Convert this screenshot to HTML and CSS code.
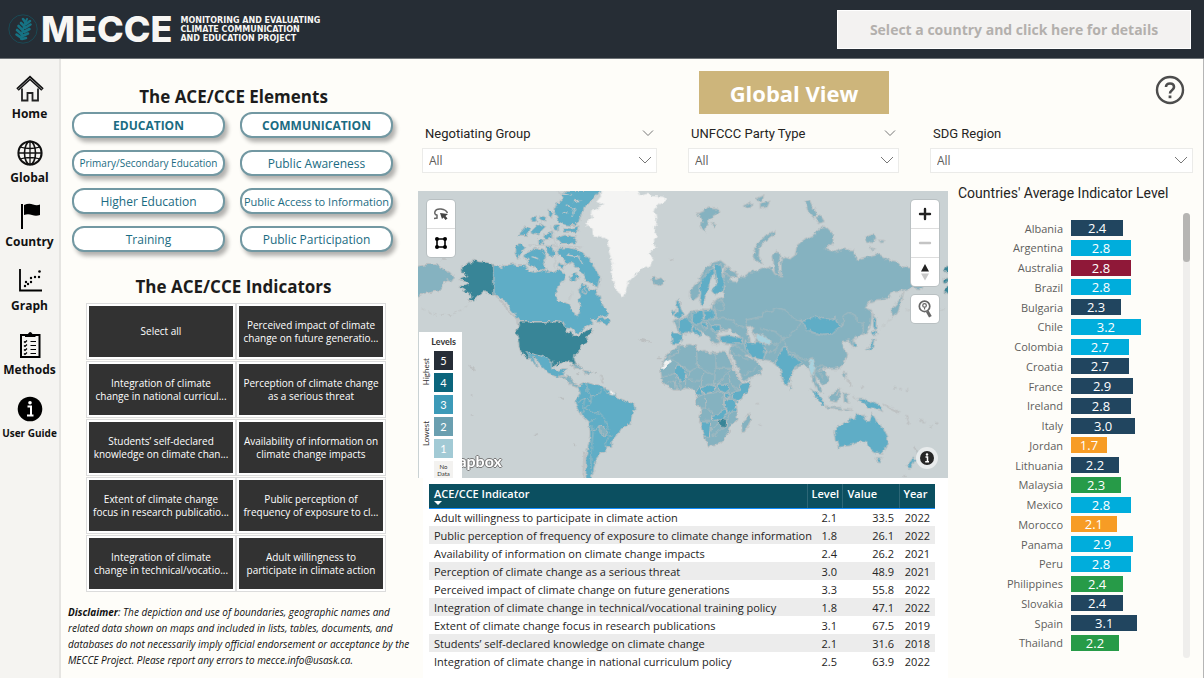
FILE: index.html
```html
<!DOCTYPE html>
<html lang="en">
<head>
<meta charset="utf-8">
<title>MECCE Global View</title>
<link rel="stylesheet" href="styles.css">
</head>
<body>
<header class="topbar">
  <div class="brand">
    <svg class="brand-mark" viewBox="0 0 30 30" aria-hidden="true">
      <circle cx="15" cy="15" r="14.2" fill="none" stroke="#1a4a56" stroke-width="1"/>
      <g fill="none" stroke="#167384" stroke-linecap="round">
        <path d="M13 25Q14 16 19 5" stroke-width="2"/>
        <path d="M18 9L15 5M17 13L13 9M15.500 17L10.500 12M14.500 21L9 16M13.500 24L8.500 20.500" stroke-width="2.600"/>
        <path d="M18 10L22 7M17 14L22.500 10.500M16 18L21.500 15M14.500 22L20 19.500M14 25L18 24" stroke-width="2.600"/>
      </g>
    </svg>
    <span class="brand-name">MECCE</span>
    <span class="brand-tag">MONITORING AND EVALUATING<br>CLIMATE COMMUNICATION<br>AND EDUCATION PROJECT</span>
  </div>
  <button class="details-btn" type="button">Select a country and click here for details</button>
</header>

<div class="shell">
  <nav class="sidebar" aria-label="Pages">
    <a class="nav-item" href="#home">
      <svg viewBox="0 0 28 28"><path d="M6 13.500V25.500H11.500V18H16.500V25.500H22V13.500" fill="none" stroke="#222" stroke-width="1.800"/><path d="M1.500 14.500L14 3L26.500 14.500" fill="none" stroke="#111" stroke-width="3.600"/><path d="M1.800 14.300L14 3.200L26.200 14.300" fill="none" stroke="#888" stroke-width="1"/></svg>
      <span>Home</span></a>
    <a class="nav-item" href="#global">
      <svg viewBox="0 0 28 28" fill="none" stroke="#111"><circle cx="14" cy="14" r="11.600" stroke-width="2"/><ellipse cx="14" cy="14" rx="5.500" ry="11.600" stroke-width="1.600"/><path d="M14 2V26M2 14H26M4 8Q14 11 24 8M4 20Q14 17 24 20" stroke-width="1.300"/></svg>
      <span>Global</span></a>
    <a class="nav-item" href="#country">
      <svg viewBox="0 0 28 28"><path d="M6 1V26" stroke="#000" stroke-width="2"/><path d="M8 2Q13 0 17 1.500T24 1.500V12Q20 13.500 16 12T8 12Z"/></svg>
      <span>Country</span></a>
    <a class="nav-item" href="#graph">
      <svg viewBox="0 0 28 28"><path d="M4 2V23.500H26" fill="none" stroke="#000" stroke-width="1.800"/><g><circle cx="9" cy="19" r="1.200"/><circle cx="10" cy="15" r="1.200"/><circle cx="12" cy="17" r="1.200"/><circle cx="15" cy="11" r="1.200"/><circle cx="15" cy="15" r="1.200"/><circle cx="19" cy="10" r="1.200"/><circle cx="23" cy="10" r="1.200"/><circle cx="23.500" cy="4.500" r="1.300"/></g></svg>
      <span>Graph</span></a>
    <a class="nav-item" href="#methods">
      <svg viewBox="0 0 28 28"><rect x="5" y="4" width="18.500" height="22" fill="none" stroke="#000" stroke-width="2"/><path d="M9 6V3H12Q14.200-1 16.500 3H19.500V6Z"/><path d="M8 10.500l1 1 2-2M8 14.500l1 1 2-2M8 18.500l1 1 2-2M8 22.500l1 1 2-2M14.500 10.500H20M14.500 14.500H20M14.500 18.500H20M14.500 22.500H20" fill="none" stroke="#000" stroke-width="1.200"/></svg>
      <span>Methods</span></a>
    <a class="nav-item nav-small" href="#guide">
      <svg viewBox="0 0 28 28"><circle cx="14" cy="14" r="12.300"/><circle cx="14" cy="7.800" r="1.800" fill="#fff"/><path d="M11.500 11.500H15V20M11 20.500H17.500" fill="none" stroke="#fff" stroke-width="2"/></svg>
      <span>User Guide</span></a>
  </nav>

  <section class="left">
    <h2>The ACE/CCE Elements</h2>
    <div class="elements">
      <button class="pill head" type="button">EDUCATION</button>
      <button class="pill head" type="button">COMMUNICATION</button>
      <button class="pill small" type="button">Primary/Secondary Education</button>
      <button class="pill" type="button">Public Awareness</button>
      <button class="pill" type="button">Higher Education</button>
      <button class="pill tight" type="button">Public Access to Information</button>
      <button class="pill" type="button">Training</button>
      <button class="pill" type="button">Public Participation</button>
    </div>
    <h2>The ACE/CCE Indicators</h2>
    <div class="indicators">
      <button type="button">Select all</button>
      <button type="button">Perceived impact of climate<br>change on future generatio...</button>
      <button type="button">Integration of climate<br>change in national curricul...</button>
      <button type="button">Perception of climate change<br>as a serious threat</button>
      <button type="button">Students’ self-declared<br>knowledge on climate chan...</button>
      <button type="button">Availability of information on<br>climate change impacts</button>
      <button type="button">Extent of climate change<br>focus in research publicatio...</button>
      <button type="button">Public perception of<br>frequency of exposure to cl...</button>
      <button type="button">Integration of climate<br>change in technical/vocatio...</button>
      <button type="button">Adult willingness to<br>participate in climate action</button>
    </div>
    <p class="disclaimer"><b>Disclaimer</b>: The depiction and use of boundaries, geographic names and<br>related data shown on maps and included in lists, tables, documents, and<br>databases do not necessarily imply official endorsement or acceptance by the<br>MECCE Project. Please report any errors to mecce.info@usask.ca.</p>
  </section>

  <main class="content">
    <div class="title-row">
      <button class="view-btn" type="button">Global View</button>
      <button class="help" type="button" aria-label="Help">
        <svg viewBox="0 0 30 30" fill="none" stroke="#4d4d4d"><circle cx="15" cy="15" r="13" stroke-width="2.400"/><path d="M11 12Q11 8.500 15 8.500T19 12Q19 13.800 17 15.200T15 18.500" stroke-width="2.600"/><path d="M15 20.500V23.200" stroke-width="2.800"/></svg>
      </button>
    </div>

    <div class="filters">
      <div class="filter">
        <div class="filter-head"><label for="f1">Negotiating Group</label><button type="button" aria-label="Expand Negotiating Group"><svg viewBox="0 0 12 8"><path d="M1 1.500L6 6.500L11 1.500"/></svg></button></div>
        <div class="select"><select id="f1"><option>All</option></select><svg viewBox="0 0 14 8"><path d="M1 1L7 7L13 1"/></svg></div>
      </div>
      <div class="filter">
        <div class="filter-head"><label for="f2">UNFCCC Party Type</label><button type="button" aria-label="Expand UNFCCC Party Type"><svg viewBox="0 0 12 8"><path d="M1 1.500L6 6.500L11 1.500"/></svg></button></div>
        <div class="select"><select id="f2"><option>All</option></select><svg viewBox="0 0 14 8"><path d="M1 1L7 7L13 1"/></svg></div>
      </div>
      <div class="filter">
        <div class="filter-head"><label for="f3">SDG Region</label></div>
        <div class="select"><select id="f3"><option>All</option></select><svg viewBox="0 0 14 8"><path d="M1 1L7 7L13 1"/></svg></div>
      </div>
    </div>

    <div class="lower">
      <div class="middle">
        <div class="map">
          <svg class="world" viewBox="9 18 1590 861" preserveAspectRatio="xMidYMid slice" role="img" aria-label="World map of indicator levels">
            <defs>
              <filter id="coast" x="0" y="0" width="1620" height="900" filterUnits="userSpaceOnUse">
                <feTurbulence type="fractalNoise" baseFrequency="0.060" numOctaves="3" seed="4" result="n"/>
                <feDisplacementMap in="SourceGraphic" in2="n" scale="15" xChannelSelector="R" yChannelSelector="G"/>
              </filter>
            </defs>
            <g filter="url(#coast)" class="land">
              <!-- Bering region, Alaska, Canada -->
              <path class="l2" d="M0 245L40 238 72 240 85 252 105 262 118 278 108 292 98 284 84 290 80 305 70 318 50 322 30 325 12 332 0 340Z"/>
              <path class="l4" d="M140 243L160 238 175 225 190 230 215 232 236 238V332L222 326 205 320 190 332 175 350 160 345 170 335 158 322 143 322 152 312 135 304 158 296 158 290 132 284 158 275 142 262Z"/>
              <path class="coast" d="M172 345L140 375 110 388 70 392 40 382 15 365" stroke-dasharray="12 8"/>
              <path class="edge" d="M236 332L262 350 280 378 305 400 308 416"/>
              <path class="l3" d="M237 240L258 248 275 240 295 236 310 242 330 242 342 258 360 262 375 258 385 250 400 262 415 262 432 252 448 265 452 278 445 290 430 305 422 325 425 345 445 355 460 358 468 365 475 380 482 396 492 388 495 370 490 350 499 340 490 312 500 295 515 300 525 318 540 308 555 340 565 362 580 382 570 392 545 400 528 405 535 415 515 425 500 438 485 446 470 430 455 425 440 415 422 410 315 410 305 395 285 370 270 345 245 332 237 332Z"/>
              <path class="l3" d="M540 402L575 398 590 410 572 420 560 410 545 412Z"/>
              <path class="l3" d="M303 182L320 178 332 190 318 205 308 222 302 200Z"/>
              <path class="l3" d="M335 205L360 190 385 195 395 215 385 235 395 250 372 256 350 244 335 240 340 225 325 215Z"/>
              <path class="l3" d="M310 150L330 125 345 132 335 152ZM350 140L375 115 392 125 372 145 355 152ZM348 100L362 92 365 108 352 112ZM378 92L392 98 388 112 375 104ZM385 150L410 140 412 158 392 165ZM402 72L414 82 410 100 402 92ZM418 120L432 118 430 140 418 138ZM392 185L412 182 420 205 408 220 396 205ZM370 165L385 160 385 176 372 178Z"/>
              <path class="l3" d="M425 158L450 150 485 156 480 174 440 176ZM442 128L470 130 492 122 486 142 448 142Z"/>
              <path class="l3" d="M558 16L545 32 525 48 510 65 500 85 492 110 475 122 450 120 430 108 418 85 422 60 445 40 438 28 455 16Z"/>
              <path class="l3" d="M425 190L460 188 490 195 512 212 530 232 542 255 555 275 548 308 530 296 512 288 500 262 478 242 470 232 455 240 445 222 430 208Z"/>
              <path class="l3" d="M462 275L482 262 492 280 470 290ZM434 232L448 238 446 250 432 244ZM500 318L512 310 512 325Z"/>
              <path class="fjord" d="M450 60L480 70 470 95M500 45L475 50M440 85L460 80M455 210L490 215 505 240M350 215L372 222M470 320L462 345M428 20L470 30M405 120L425 185 420 250M340 180L420 182 500 186"/>
              <!-- Greenland, Iceland -->
              <path class="nd" d="M556 14L665 14 672 30 700 24 712 34 745 36 755 44 738 58 728 55 718 80 724 105 718 130 724 155 712 175 722 188 700 205 712 218 705 242 680 250 655 275 640 290 632 320 626 334 610 325 598 300 590 270 594 235 582 200 578 165 560 155 535 150 532 130 512 115 535 98 528 80 565 60 545 50 558 35Z"/>
              <path class="l2" d="M706 280L718 276 722 284 738 278 750 290 732 302 715 298Z"/>
              <!-- United States and Central America -->
              <path class="l4" d="M311 411H430L448 416 458 430 452 446 470 440 478 452 490 450 500 442 515 436 530 430 532 444 515 456 518 468 498 480 494 495 480 508 478 522 486 542 480 552 472 532 445 530 430 535 412 548 400 538 380 532 350 520 335 520 320 508 312 485 305 440Z"/>
              <path class="l3" d="M333 500L350 504 378 510 395 520 405 528 412 528 413 552 430 563 445 550 457 552 448 566 435 572 430 574 400 565 385 550 370 535 358 515 350 510 368 546 362 544 345 518Z"/>
              <path class="l2" d="M432 570L450 572 468 576 472 594 490 602 486 608 470 602 456 586Z"/>
              <path class="l2" d="M463 540Q488 536 508 554L490 552ZM510 556L530 560 526 568 508 566ZM484 566L494 566 490 570ZM538 562L546 562 542 566Z"/>
              <!-- South America -->
              <path class="l3" d="M488 605L500 598 515 592 535 598 555 600 565 610 580 615 600 622 606 638 632 648 655 656 663 670 650 695 645 718 620 730 608 750 590 770 590 785 572 785 572 803 555 808 545 820 540 840 535 860 528 890 512 890 512 820 520 780 525 750 522 710 500 690 485 665 480 650 488 638 496 625Z"/>
              <path class="edge" d="M508 805L505 880"/>
              <path class="l2" d="M550 726L562 724 582 742 572 755 558 745Z"/>
              <path class="nd" d="M585 617L596 620 594 630 586 628Z"/>
              <path class="line" d="M488 650L510 640 528 650 530 632 550 628 560 612M515 592L516 620 530 632M510 640L500 690M565 610L575 628 606 632M528 650L510 670 530 682 548 680 572 705 580 735M525 710L545 700M530 720L535 740 528 800 528 850M530 740L552 728M572 755L588 752 570 772 572 785M452 572L455 582"/>

              <!-- Africa -->
              <g transform="translate(795 420)">
                <path class="l2" d="M30 58L-2 62-22 72-45 98-58 130-56 162-44 180-20 195 5 195 15 190 40 192 48 208 50 230 62 255 58 292 68 320 82 363 105 362 125 350 148 318 152 300 171 285 172 250 166 235 190 215 212 188 213 172 186 175 175 160 160 130 145 95 140 82 115 80 90 84 75 76 55 78 50 62Z"/>
                <path class="nd" d="M-56 130L-44 108-28 102-26 110-40 118-46 132Z"/>
                <path class="l3" d="M-12 120L2 120 22 148 15 165-5 168-14 145ZM45 205L60 182 70 205 52 212ZM62 190L85 178 106 184 100 200 74 206ZM110 176L140 178 148 192 136 204 116 196ZM175 177L214 170 205 195 172 232 156 218 160 200 182 196ZM134 205L150 204 150 218 134 220ZM133 224L156 222 170 242 166 260 148 260 132 242ZM98 272L118 264 138 252 142 268 120 288 98 288ZM60 290L92 290 88 336 70 332Z"/>
                <path class="l4" d="M114 292L128 282 140 288 138 306 122 304Z"/>
                <path class="l2" d="M185 292L200 280 208 264 212 282 198 320 186 322Z"/>
                <path class="line" d="M-2 62L-5 85-40 100M50 80L52 125 30 140-25 100M108 82L108 130 158 130M52 125L105 152 105 130M30 140L25 165 62 168 72 140M68 165L66 188M105 152L104 182M15 190L18 165M-14 145L-54 158M-40 175L-15 165-10 195M145 150L150 175 175 195M160 130L140 145 110 178M75 206L78 250 98 262 98 290M78 206L128 200 132 245M60 250L80 248M88 336L95 310 116 295M95 335L110 325 128 308M152 262L140 285M0 166L0 195"/>
              </g>

              <!-- Eurasia -->
              <g transform="translate(795 0)">
                <path class="l2" d="M-20 405L20 396 35 378 65 374 92 376 95 355 112 342 130 335 128 280 135 250 150 250 172 266 178 278 152 272 148 288 168 290 188 275 205 262 225 258 255 248 270 244 285 268 305 272 302 230 310 215 330 222 345 210 350 182 370 165 400 150 418 132 430 124 446 132 462 150 458 175 436 192 465 200 490 192 520 195 530 225 570 212 595 206 625 224 650 230 665 244 700 250 735 270 740 290 725 312 695 308 660 320 640 322 618 342 590 345 565 352 555 372 575 378 575 400 572 425 560 445 540 452 520 462 524 485 514 480 508 465 485 470 492 488 500 510 492 535 470 550 450 550 428 550 442 572 446 588 430 602 412 582 406 572 410 592 424 612 428 626 412 616 400 592 398 570 385 552 372 540 350 548 332 572 330 590 320 604 306 580 298 540 275 530 250 528 230 524 215 518 228 530 246 545 240 568 212 580 188 590 176 574 160 540 148 510 155 480 128 478 116 468 118 455 110 445 118 478 100 478 84 455 66 436 64 450 52 436 35 444 5 450-5 440Z"/>
                <path class="sea" d="M108 448L122 434 140 436 150 430 158 442 182 452 165 458 130 456ZM200 428L222 426 215 440 228 462 226 480 210 474 204 450ZM200 505L218 520 212 522 200 512ZM146 506L158 510 186 582 178 580Z"/>
                <!-- Scandinavia -->
                <path class="l2" d="M28 335L30 318 46 300 60 280 75 252 95 234 122 226 138 240 130 250 100 246 80 270 62 292 56 335 40 346Z"/>
                <path class="l2" d="M138 245L165 262 175 276 150 274 134 262Z"/>
                <path class="l3" d="M60 292L78 268 96 248 106 262 90 292 82 318 70 360 58 354 62 325Z"/>
                <path class="l3" d="M102 240L124 240 132 290 128 318 106 330 94 318 110 298 104 268Z"/>
                <!-- Western Europe -->
                <path class="l3" d="M-12 345L0 342 0 362 14 390 0 398-18 396-8 378ZM-26 380L-14 372-14 388-26 392ZM-5 408L22 398 36 420 30 444 0 448ZM38 382L66 376 70 402 54 418 36 412ZM70 378L104 376 104 402 74 404ZM-26 442L10 446 4 468-6 478-24 476ZM32 424L46 426 66 446 60 456 42 438ZM95 420L120 420 122 438 98 438ZM62 412L78 412 80 432 66 428Z"/>
                <path class="line" d="M104 402L108 380 98 352 130 345M105 402L130 400 165 408 172 425M80 405L94 422M104 378L132 372 125 340"/>
                <!-- Asian highlights -->
                <path class="l3" d="M118 456L142 450 168 456 188 458 186 472 160 478 126 474ZM195 468L216 476 236 472 256 482 256 500 250 526 232 522 212 512 200 495ZM298 510L306 490 320 488 326 508 345 516 364 534 345 548 332 572 330 590 320 604 306 580 298 545 288 535Z"/>
                <path class="l1" d="M224 450L246 448 274 468 266 480 244 474 228 464ZM384 540L396 522 408 546 400 570 388 560Z"/>
                <path class="l3" d="M365 406L388 402 406 392 426 400 450 404 468 400 474 414 490 420 470 432 455 446 425 448 395 442 378 430Z"/>
                <path class="line" d="M172 425L200 428 198 405 245 395 250 380 275 378 290 370 320 380 345 402 365 408M490 418L490 392 505 382 525 390 530 410 550 412 550 445M365 412L350 430 330 450 308 460 285 440 240 430M308 462L290 480 270 470M308 462L320 490 350 515 385 525 400 520M250 500L285 500 295 480M410 545L425 540 440 550M400 570L412 555 430 580M156 480L175 485 200 510M155 500L170 510 205 525M188 570L215 560 230 545M185 470L200 480"/>
                <!-- Arctic islands -->
                <path class="l2" d="M50 85L72 78 85 65 115 70 120 82 100 95 84 108 75 140 62 130 66 108ZM95 112L106 118 100 130ZM190 62L215 50 215 66 195 72ZM228 40L252 30 246 46 232 50ZM240 55L270 48 262 66 240 70ZM218 215L230 180 255 152 285 136 285 146 258 165 240 185 236 212 248 236 226 226ZM375 50L392 44 400 68 412 88 402 100 384 80ZM408 98L422 92 434 110 414 116ZM278 212L292 196 300 215 296 250 304 272 284 266ZM558 155L580 148 592 160 575 174 560 168ZM598 165L616 168 606 174ZM570 185L585 190 574 195Z"/>
                <path class="l2" d="M672 320L658 345 634 372 636 398 652 386 662 358Z"/>
                <path class="l4" d="M815 238L798 245 790 256 815 272ZM788 284L806 278 806 292 790 292ZM800 308L815 302 815 330 794 322Z"/>
                <path class="coast" d="M675 372L720 385 760 382 800 368M634 402L600 430" stroke-dasharray="16 10"/>
                <!-- Japan and islands -->
                <path class="l3" d="M554 492L572 484 578 462 586 460 582 484 566 496ZM576 442L590 436 592 446 578 450ZM578 384L588 402 588 436 580 430ZM518 466L526 470 528 484 520 488Z"/>
              </g>

              <!-- South-east Asia and Oceania -->
              <g transform="translate(795 420)">
                <path class="l3" d="M390 190L412 205 436 236 430 242 408 220ZM330 178L336 190 330 194ZM535 224L556 222 562 234 582 230 600 242 612 260 590 254 566 250 556 238Z"/>
                <path class="l2" d="M434 242L482 248 486 254 440 248ZM445 212L460 206 476 188 484 205 470 232 450 228ZM490 206L510 204 498 214 506 234 492 232ZM490 250L520 252 500 256ZM416 135L422 130 424 140ZM490 138L500 144 498 160 490 154Z"/>
                <path class="edge" d="M502 164L514 172 514 186M610 236L656 262M678 275L686 295M702 366L714 382M520 215L530 220M470 210L482 190" />
                <path class="l3" d="M464 318L475 302 500 292 510 278 522 284 530 268 552 268 556 286 568 292 577 264 590 290 612 312 624 336 622 360 610 384 586 384 568 370 562 354 540 350 510 362 475 367 468 345ZM588 398L606 398 600 410 592 410Z"/>
                <path class="l3" d="M678 425L700 398 708 403 690 430Z"/>
                <path class="l1" d="M710 378L722 384 714 396Z"/>
                <path class="edge" d="M545 186h4M642 188h3M660 192h3M680 195h3M232 236h3M240 300h3M720 285h8M726 292h8M750 305h3M765 295h8M672 453h4"/>
              </g>
              <path class="edge" d="M165 546L182 556M434 638L446 642M676 464L704 470M170 630h3M363 748h3M478 781h3M768 225h5M170 690h3M555 568L566 590M730 520h8M80 222h10"/>
            </g>
          </svg>

          <div class="tools tools-left">
            <button type="button" aria-label="Lasso select"><svg viewBox="0 0 18 18" fill="none" stroke="#666" stroke-width="1.500"><path d="M5 10Q2 9.500 3 6.500T9 4T15.500 8M3 9.500L5 10V13L2 13.500"/><path d="M8 8L16 9L13.500 11L15.500 13.500L13.500 15L11.500 12.500L10 14Z" fill="#444" stroke="none"/></svg></button>
            <button type="button" aria-label="Rectangle select"><svg viewBox="0 0 18 18"><path d="M5 5H13V13H5Z" fill="none" stroke="#000" stroke-width="1.600"/><g><circle cx="5" cy="5" r="2"/><circle cx="13" cy="5" r="2"/><circle cx="5" cy="13" r="2"/><circle cx="13" cy="13" r="2"/></g></svg></button>
          </div>
          <div class="tools-right">
            <div class="tools">
              <button type="button" aria-label="Zoom in"><svg viewBox="0 0 18 18"><path d="M9 4V14M4 9H14" stroke="#222" stroke-width="2.400" stroke-linecap="round"/></svg></button>
              <button type="button" aria-label="Zoom out"><svg viewBox="0 0 18 18"><path d="M4 9H14" stroke="#c4c4c4" stroke-width="2.400" stroke-linecap="round"/></svg></button>
              <button type="button" aria-label="Reset bearing"><svg viewBox="0 0 18 18"><path d="M9 1L13 8.500H5Z" fill="#222"/><path d="M9 17.500L13 10.500H5Z" fill="#c8c8c8"/></svg></button>
            </div>
            <div class="tools">
              <button type="button" aria-label="Search map"><svg viewBox="0 0 18 20" fill="none" stroke="#666"><circle cx="8.500" cy="7" r="5.800" stroke-width="1.900"/><circle cx="8.500" cy="6" r="2" stroke-width="1.400"/><path d="M8.500 8V10.500" stroke-width="1.300"/><path d="M11.500 12.500L15 18.500" stroke-width="3.400"/></svg></button>
            </div>
          </div>
          <span class="mapbox">mapbox</span>
          <div class="legend">
            <strong>Levels</strong>
            <div class="legend-body">
              <div class="legend-side"><span>Highest</span><span>Lowest</span></div>
              <ol>
                <li class="k5">5</li><li class="k4">4</li><li class="k3">3</li><li class="k2">2</li><li class="k1">1</li><li class="k0">No<br>Data</li>
              </ol>
            </div>
          </div>
          <button class="map-info" type="button" aria-label="Map information"><svg viewBox="0 0 22 22"><circle cx="11" cy="11" r="11" fill="#e8ebec"/><circle cx="11" cy="11" r="7" fill="#262626"/><circle cx="11" cy="7.500" r="1.200" fill="#fff"/><path d="M9.500 10H11.500V14.500M9.200 14.800H13" fill="none" stroke="#fff" stroke-width="1.500"/></svg></button>
        </div>

        <div class="table-wrap">
          <table>
            <colgroup><col><col class="c-level"><col class="c-value"><col class="c-year"></colgroup>
            <thead><tr><th class="sorted">ACE/CCE Indicator</th><th>Level</th><th>Value</th><th>Year</th></tr></thead>
            <tbody>
              <tr><td>Adult willingness to participate in climate action</td><td>2.1</td><td>33.5</td><td>2022</td></tr>
              <tr><td>Public perception of frequency of exposure to climate change information</td><td>1.8</td><td>26.1</td><td>2022</td></tr>
              <tr><td>Availability of information on climate change impacts</td><td>2.4</td><td>26.2</td><td>2021</td></tr>
              <tr><td>Perception of climate change as a serious threat</td><td>3.0</td><td>48.9</td><td>2021</td></tr>
              <tr><td>Perceived impact of climate change on future generations</td><td>3.3</td><td>55.8</td><td>2022</td></tr>
              <tr><td>Integration of climate change in technical/vocational training policy</td><td>1.8</td><td>47.1</td><td>2022</td></tr>
              <tr><td>Extent of climate change focus in research publications</td><td>3.1</td><td>67.5</td><td>2019</td></tr>
              <tr><td>Students’ self-declared knowledge on climate change</td><td>2.1</td><td>31.6</td><td>2018</td></tr>
              <tr><td>Integration of climate change in national curriculum policy</td><td>2.5</td><td>63.9</td><td>2022</td></tr>
            </tbody>
          </table>
        </div>
      </div>

      <section class="chart">
        <h3>Countries' Average Indicator Level</h3>
        <div class="chart-body">
          <ul>
            <li><span>Albania</span><div><b class="navy" style="width:48%">2.4</b></div></li>
            <li><span>Argentina</span><div><b class="cyan" style="width:55%">2.8</b></div></li>
            <li><span>Australia</span><div><b class="wine" style="width:55%">2.8</b></div></li>
            <li><span>Brazil</span><div><b class="cyan" style="width:55%">2.8</b></div></li>
            <li><span>Bulgaria</span><div><b class="navy" style="width:46%">2.3</b></div></li>
            <li><span>Chile</span><div><b class="cyan" style="width:64%">3.2</b></div></li>
            <li><span>Colombia</span><div><b class="cyan" style="width:53%">2.7</b></div></li>
            <li><span>Croatia</span><div><b class="navy" style="width:53%">2.7</b></div></li>
            <li><span>France</span><div><b class="navy" style="width:57%">2.9</b></div></li>
            <li><span>Ireland</span><div><b class="navy" style="width:55%">2.8</b></div></li>
            <li><span>Italy</span><div><b class="navy" style="width:59%">3.0</b></div></li>
            <li><span>Jordan</span><div><b class="orange" style="width:33%">1.7</b></div></li>
            <li><span>Lithuania</span><div><b class="navy" style="width:44%">2.2</b></div></li>
            <li><span>Malaysia</span><div><b class="green" style="width:46%">2.3</b></div></li>
            <li><span>Mexico</span><div><b class="cyan" style="width:55%">2.8</b></div></li>
            <li><span>Morocco</span><div><b class="orange" style="width:42%">2.1</b></div></li>
            <li><span>Panama</span><div><b class="cyan" style="width:57%">2.9</b></div></li>
            <li><span>Peru</span><div><b class="cyan" style="width:55%">2.8</b></div></li>
            <li><span>Philippines</span><div><b class="green" style="width:48%">2.4</b></div></li>
            <li><span>Slovakia</span><div><b class="navy" style="width:48%">2.4</b></div></li>
            <li><span>Spain</span><div><b class="navy" style="width:61%">3.1</b></div></li>
            <li><span>Thailand</span><div><b class="green" style="width:44%">2.2</b></div></li>
          </ul>
          <div class="scrollbar"><div class="thumb"></div></div>
        </div>
      </section>
    </div>
  </main>
</div>
</body>
</html>
```
FILE: styles.css
```css
* { box-sizing: border-box; }
body {
  margin: 0;
  min-height: 100vh;
  display: flex;
  flex-direction: column;
  background: #fefdf9;
  color: #252423;
  font-family: "Open Sans", "Noto Sans", sans-serif;
  font-size: 11px;
}
button, select { font: inherit; color: inherit; border: 0; background: none; padding: 0; margin: 0; }
h2, h3, p, ul, ol { margin: 0; padding: 0; }
ul, ol { list-style: none; }
svg { display: block; }

.topbar {
  height: 59px;
  padding: 0 13px 0 8px;
  display: flex;
  align-items: center;
  justify-content: space-between;
  background: #262d35;
  border-bottom: 1px solid #6d7276;
}
.brand { display: flex; align-items: center; color: #f7f6f4; }
.brand-mark { width: 30px; height: 30px; margin-right: 3px; }
.brand-name { font: 800 36px/36px Inter, sans-serif; margin-right: 8px; }
.brand-tag { font: 700 8px/9px "DejaVu Sans", sans-serif; }
.details-btn {
  width: 354px;
  height: 39px;
  background: #f3f2f1;
  border: 1px solid #fff;
  color: #b3b0ad;
  font-size: 14px;
  font-weight: 700;
}

.shell { flex: 1; display: flex; border-right: 1px solid #b5b5b5; }
.sidebar {
  width: 61px;
  padding-top: 16px;
  display: flex;
  flex-direction: column;
  gap: 15px;
  background: #f5f4f1;
  border-right: 2px solid #e6e5e2;
}
.nav-item {
  display: flex;
  flex-direction: column;
  align-items: center;
  color: #111;
  font-size: 12px;
  font-weight: 700;
  line-height: 21px;
  text-decoration: none;
  white-space: nowrap;
}
.nav-item svg { width: 28px; height: 28px; }
.nav-small { font-size: 10px; }

.left { width: 357px; padding: 26px 19px 8px 7px; }
h2 { font-size: 17px; font-weight: 700; line-height: 24px; text-align: center; color: #1c1c1c; }
.elements {
  display: grid;
  grid-template-columns: 1fr 1fr;
  gap: 12px 15px;
  padding: 3px 6px 0 4px;
  margin-bottom: 23px;
}
.pill {
  height: 26px;
  background: #fff;
  border: 2px solid #7298a2;
  border-radius: 12px;
  box-shadow: 3px 4px 4px rgba(0, 0, 0, .3);
  color: #1a6b82;
  font-size: 12px;
  white-space: nowrap;
}
.pill.head { font-weight: 700; }
.pill.small { font-size: 10px; }
.pill.tight { font-size: 11px; }
.indicators {
  display: grid;
  grid-template-columns: 1fr 1fr;
  gap: 7px 6px;
  padding: 7px 16px 0 21px;
}
.indicators button {
  height: 51px;
  background: #323232;
  box-shadow: 0 0 0 2px #fff, 0 0 0 3px #dcdcdc;
  color: #fff;
  font-size: 10px;
  line-height: 13px;
  white-space: nowrap;
}
.disclaimer {
  margin-top: 15px;
  color: #111;
  font-size: 10px;
  font-style: italic;
  line-height: 16px;
  white-space: nowrap;
}

.content { flex: 1; min-width: 0; padding-right: 10px; display: flex; flex-direction: column; }
.title-row {
  padding: 12px 8px 0 281px;
  display: flex;
  justify-content: space-between;
  align-items: center;
}
.view-btn {
  width: 190px;
  height: 43px;
  background: #cdb57b;
  color: #fff;
  font-size: 22px;
  font-weight: 700;
}
.help { margin-bottom: 6px; }
.help svg { width: 30px; height: 30px; }

.filters {
  display: grid;
  grid-template-columns: 235fr 211fr 263fr;
  gap: 31px;
  padding: 9px 0 0 4px;
}
.filter-head {
  display: flex;
  justify-content: space-between;
  align-items: center;
  height: 20px;
  padding: 0 3px;
  font-family: Roboto, sans-serif;
  font-size: 13px;
}
.filters svg { fill: none; stroke: #777; stroke-width: 1; }
.filter-head svg { width: 12px; height: 8px; }
.select { position: relative; margin-top: 5px; }
.select select {
  appearance: none;
  width: 100%;
  height: 25px;
  padding: 0 6px;
  background: #fff;
  border: 1px solid #ebebe9;
  color: #605e5c;
  font-size: 12px;
}
.select svg { position: absolute; right: 5px; top: 8px; width: 14px; height: 8px; pointer-events: none; }

.lower {
  flex: 1;
  display: grid;
  grid-template-columns: minmax(0, 1fr) 240px;
  gap: 5px;
  padding-top: 10px;
}
.middle { padding-top: 8px; display: flex; flex-direction: column; }
.map { position: relative; overflow: hidden; aspect-ratio: 530 / 287; background: #cad2d4; }
.world { width: 100%; height: 100%; }
.land path { stroke: #bcbfc0; stroke-width: 3; stroke-linejoin: round; }
.land .l1 { fill: #a9d3df; }
.land .l2 { fill: #85b2c0; }
.land .l3 { fill: #5fadc6; }
.land .l4 { fill: #378597; }
.land .nd { fill: #f4f4f3; stroke: #e6e8e8; }
.land .sea { fill: #cad2d4; }
.land .line, .land .coast { fill: none; stroke-width: 2; }
.land .edge { fill: none; stroke-width: 5; stroke-linecap: round; }
.land .fjord { fill: none; stroke: #c2c8ca; stroke-width: 4; }

.tools { background: #fff; border-radius: 4px; box-shadow: 0 0 0 1px #b9c0c2; overflow: hidden; }
.tools button { display: flex; align-items: center; justify-content: center; width: 28px; height: 28px; }
.tools button + button { height: 29px; border-top: 1px solid #ddd; }
.tools svg { width: 18px; height: 18px; }
.tools-left { position: absolute; left: 9px; top: 9px; }
.tools-right { position: absolute; right: 9px; top: 9px; display: flex; flex-direction: column; gap: 9px; }
.mapbox {
  position: absolute;
  left: 27px;
  bottom: 7px;
  color: #fff;
  font: 700 16px/20px Lato, sans-serif;
  text-shadow: 1px 0 #777, -1px 0 #777, 0 1px #777, 0 -1px #777;
}
.legend {
  position: absolute;
  left: 1px;
  bottom: 0;
  width: 43px;
  background: #fff;
  color: #333;
  font-family: Lato, sans-serif;
}
.legend strong { display: block; font-size: 9px; line-height: 19px; text-align: right; padding-right: 6px; }
.legend-body { display: flex; justify-content: space-between; padding-right: 9px; }
.legend-side { display: flex; flex-direction: column; gap: 36px; padding-top: 7px; }
.legend-side span { writing-mode: vertical-rl; rotate: 180deg; font-size: 8px; line-height: 14px; }
.legend ol { display: flex; flex-direction: column; gap: 3px; }
.legend li { width: 19px; height: 19px; font-size: 11px; line-height: 19px; text-align: center; color: #fff; }
.legend .k5 { background: #262d37; }
.legend .k4 { background: #0b657c; }
.legend .k3 { background: #3c9ab8; }
.legend .k2 { background: #6a9fb0; }
.legend .k1 { background: #a2cad5; }
.legend .k0 { height: 17px; background: #f3f2f0; color: #333; font-size: 6px; line-height: 7px; padding-top: 2px; }
.map-info { position: absolute; right: 10px; bottom: 9px; }
.map-info svg { width: 22px; height: 22px; }

.table-wrap { flex: 1; margin-left: 5px; padding: 6px 13px 6px 6px; background: #fff; }
table { width: 100%; border-collapse: collapse; table-layout: fixed; }
.c-level { width: 35px; }
.c-value { width: 57px; }
.c-year { width: 36px; }
th {
  height: 24px;
  padding: 3px 0 0 5px;
  background: #0b4f60;
  border-bottom: 1px solid #118dff;
  border-left: 1px solid #2d6777;
  color: #fff;
  font-size: 11px;
  font-weight: 600;
  line-height: 14px;
  text-align: left;
  vertical-align: top;
}
th:nth-child(2), th:nth-child(4) { padding-left: 4px; }
.sorted { border-left: 0; }
.sorted::after {
  content: "";
  display: block;
  width: 0;
  border: 4px solid transparent;
  border-top-color: #fff;
  border-bottom: 0;
}
td { height: 18px; padding: 0 5px; line-height: 17px; white-space: nowrap; text-align: right; }
td:first-child { text-align: left; }
tbody tr:nth-child(even) { background: #ececec; }

.chart { display: flex; flex-direction: column; padding-bottom: 20px; }
h3 { font: 400 14px/20px Roboto, sans-serif; padding-left: 5px; white-space: nowrap; }
.chart-body { flex: 1; display: flex; gap: 3px; margin-top: 10px; padding-right: 3px; }
.chart ul { flex: 1; display: flex; flex-direction: column; justify-content: space-between; padding: 7px 0; }
.chart li { display: flex; align-items: center; gap: 8px; height: 16px; }
.chart li span { width: 110px; text-align: right; color: #605e5c; }
.chart li div { flex: 1; }
.chart b { display: block; height: 16px; line-height: 17px; color: #fff; font-size: 13px; font-weight: 400; text-align: center; }
.navy { background: #21455f; }
.cyan { background: #00addc; }
.wine { background: #8f1838; }
.orange { background: #f79c25; }
.green { background: #279b48; }
.scrollbar { width: 7px; background: #efeeec; border-radius: 4px; }
.thumb { height: 11%; background: #b6b5b3; border-radius: 4px; }
```
